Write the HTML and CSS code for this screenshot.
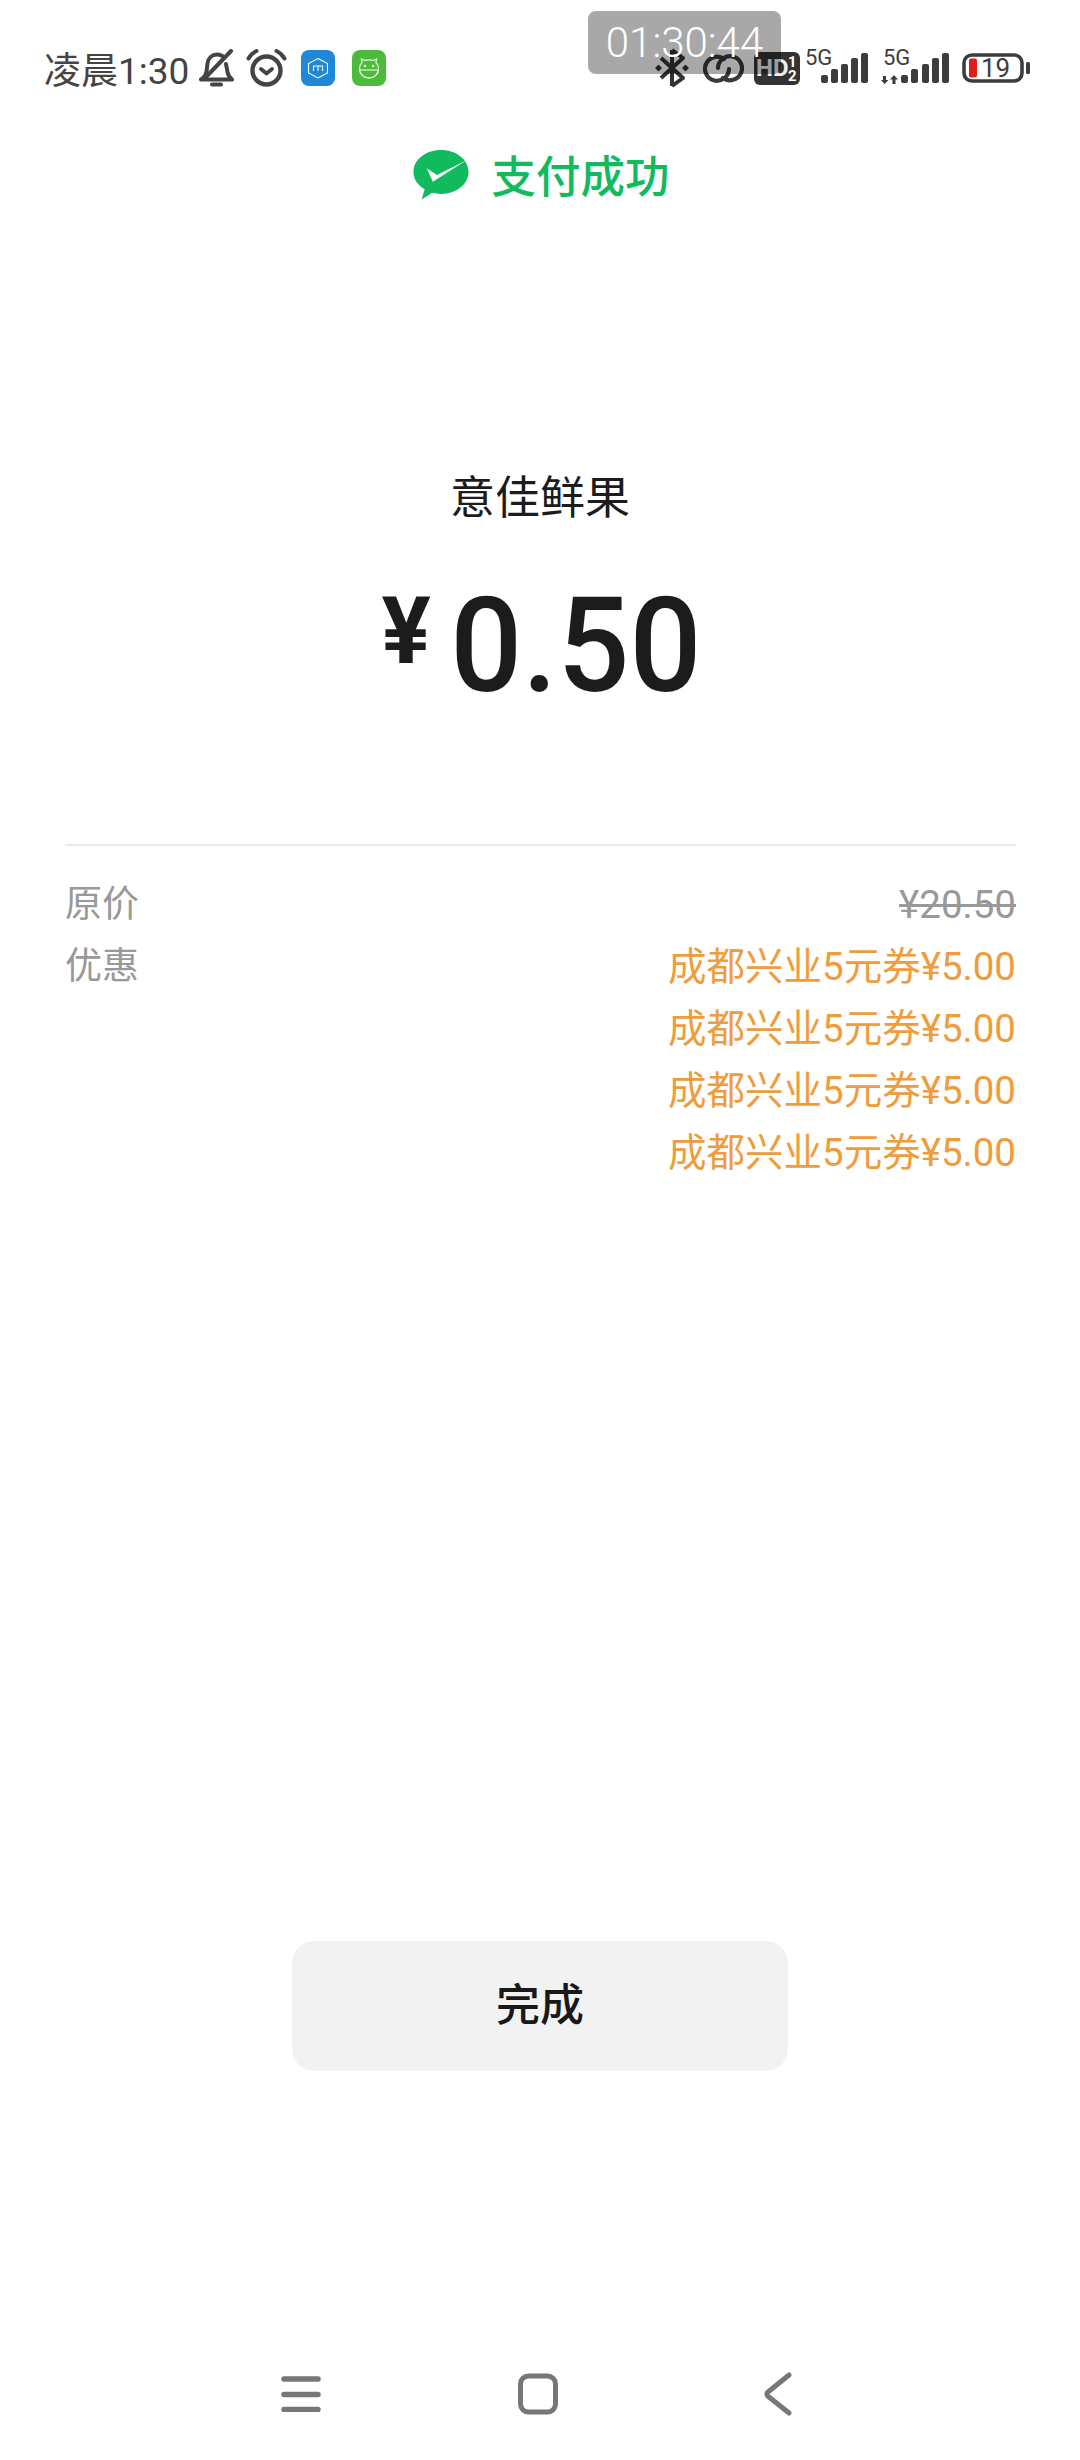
FILE: index.html

```html
<!DOCTYPE html>
<HTML lang='zh'>
   <HEAD>
      <META charset='utf-8'>
      <TITLE>支付成功</TITLE>
      <link rel="stylesheet" href="styles.css">
   </HEAD>
   <BODY>
      <DIV class='Page'>
         <!-- status bar -->
         <DIV class='StatusBar'>
            <DIV class='StatusLeft'>
               <SPAN class='Clock'>凌晨1:30</SPAN>
               <svg class='BellIcon' width='36' height='38' viewBox='0 0 36 38' fill='none' stroke='#444' stroke-width='4' stroke-linecap='round' stroke-linejoin='round'>
                  <path d='M2 30.500h31M2 30.500c3-2 5-4 5.500-8l1-8c.8-5.500 4.500-9 9.500-9 3 0 5.500 1.200 7 3M27 15l1.500 8c.6 3.500 2 5.500 4.500 7.500'/>
                  <path d='M32 2 7 28'/>
                  <path d='M13 35.500h9'/>
               </svg>
               <svg class='AlarmIcon' width='41' height='38' viewBox='0 0 41 38' fill='none' stroke='#444' stroke-linecap='round' stroke-linejoin='round'>
                  <circle cx='20.500' cy='21.500' r='14' stroke-width='4.400'/>
                  <path d='M15 20l5.500 4.500L26 20' stroke-width='3.800'/>
                  <path d='M2.500 9.500C4.500 6 7 3.500 10.500 2M38.500 9.500C36.500 6 34 3.500 30.500 2' stroke-width='4'/>
               </svg>
               <svg class='MiTile' width='34' height='36' viewBox='0 0 34 36'>
                  <rect width='34' height='36' rx='8' fill='#1f88d8'/>
                  <path d='M17 8.500l9.500 5v9.500L17 28l-9.500-5v-9.500z' fill='none' stroke='#fff' stroke-width='1.100'/>
                  <path d='M12.500 21v-5h9v5M17 16v5' fill='none' stroke='#fff' stroke-width='1.100'/>
               </svg>
               <svg class='FrogTile' width='34' height='36' viewBox='0 0 34 36'>
                  <rect width='34' height='36' rx='8' fill='#4dbb3a'/>
                  <path d='M10 12.500l-.5-3.500 3.500 1.500c2.500-.8 5.500-.8 8 0l3.500-1.500-.5 3.500c2 2 2.500 4 2.500 6.500 0 5.500-4.500 9-9.500 9s-9.500-3.500-9.500-9c0-2.500.5-4.500 2.500-6.500z' fill='none' stroke='#e8f8e0' stroke-width='1.300'/>
                  <path d='M8 20h18' stroke='#e8f8e0' stroke-width='1.100'/>
                  <circle cx='13' cy='16' r='1.300' fill='#e8f8e0'/>
                  <circle cx='21' cy='16' r='1.300' fill='#e8f8e0'/>
               </svg>
            </DIV>
            <DIV class='StatusRight'>
               <svg class='BluetoothIcon' width='36' height='40' viewBox='0 0 36 40' fill='none' stroke='#333' stroke-width='4' stroke-linejoin='round'>
                  <path d='M18 38V2M7 10l22 20-11 8M7 30l22-20-11-8'/>
                  <path d='M1 20l3.500-3.500L8 20l-3.500 3.500zM28 20l3.500-3.500L35 20l-3.500 3.500z' fill='#333' stroke='none'/>
               </svg>
               <svg class='LinkIcon' width='41' height='29' viewBox='0 0 41 29' fill='none' stroke='#3a3a3a' stroke-width='4.200' stroke-linecap='round'>
                  <path d='M21 5A12 12 0 1 0 26 15'/>
                  <path d='M20 24A12 12 0 1 0 15 14'/>
               </svg>
               <svg class='HdBadge' width='46' height='33' viewBox='0 0 46 33'>
                  <rect width='46' height='33' rx='6' fill='#333'/>
                  <text x='2' y='24' class='HdText'>HD</text>
                  <text x='34' y='14.500' class='HdNum'>1</text>
                  <text x='34' y='29' class='HdNum'>2</text>
               </svg>
               <svg class='SignalA' width='64' height='38' viewBox='0 0 64 38'>
                  <text x='0' y='19' class='NetText'>5G</text>
                  <g fill='#3c3c3c'>
                     <rect x='16' y='29' width='7' height='8' rx='2'/>
                     <rect x='26' y='23' width='7' height='14' rx='2'/>
                     <rect x='36' y='18' width='7' height='19' rx='2'/>
                     <rect x='46' y='12' width='7' height='25' rx='2'/>
                     <rect x='56' y='7' width='7' height='30' rx='2'/>
                  </g>
               </svg>
               <svg class='SignalB' width='68' height='38' viewBox='0 0 68 38'>
                  <text x='2' y='19' class='NetText'>5G</text>
                  <g fill='#3c3c3c'>
                     <path d='M2 30h3v4h2.500L3.500 38 0 34h2zM13 29l4 4.500h-2.500V38h-3v-4.500H9z'/>
                     <rect x='20' y='29' width='7' height='8' rx='2'/>
                     <rect x='30' y='23' width='7' height='14' rx='2'/>
                     <rect x='41' y='18' width='7' height='19' rx='2'/>
                     <rect x='51' y='12' width='7' height='25' rx='2'/>
                     <rect x='61' y='7' width='7' height='30' rx='2'/>
                  </g>
               </svg>
               <svg class='BatteryIcon' width='68' height='30' viewBox='0 0 68 30'>
                  <rect x='2' y='2' width='58' height='26' rx='8' fill='none' stroke='#3c3c3c' stroke-width='3.600'/>
                  <rect x='7' y='5.500' width='8' height='19' rx='2' fill='#e21b1b'/>
                  <text x='19' y='24' class='BatteryText'>19</text>
                  <rect x='64' y='9' width='4' height='12' rx='1.500' fill='#3c3c3c'/>
               </svg>
            </DIV>
            <DIV class='TimeOverlay'>01:30:44</DIV>
         </DIV>

         <!-- result header -->
         <DIV class='ResultTitle'>
            <svg class='WechatLogo' width='56' height='50' viewBox='0 0 54 49'>
               <path d='M27 0C12 0 0 9.500 0 21.500c0 7.500 4.500 13 11 17L8 48.500l10.500-6.500c2.700.7 5.500 1 8.500 1 15 0 27-9.500 27-21.500S42 0 27 0z' fill='#12ba5e'/>
               <path d='M13 18l10 6.500L52 10 19 31z' fill='#fff'/>
            </svg>
            <SPAN>支付成功</SPAN>
         </DIV>

         <!-- merchant and amount -->
         <DIV class='Merchant'>意佳鲜果</DIV>
         <DIV class='Amount'>
            <SPAN class='AmountSign'>¥</SPAN>
            <SPAN class='AmountValue'>0.50</SPAN>
         </DIV>

         <!-- price details -->
         <DIV class='Details'>
            <DIV class='DetailRow'>
               <SPAN class='DetailLabel'>原价</SPAN>
               <SPAN class='OldPrice'>¥20.50</SPAN>
            </DIV>
            <DIV class='DetailRow'>
               <SPAN class='DetailLabel'>优惠</SPAN>
               <DIV class='CouponList'>
                  <SPAN class='Coupon'>成都兴业5元券¥5.00</SPAN>
                  <SPAN class='Coupon'>成都兴业5元券¥5.00</SPAN>
                  <SPAN class='Coupon'>成都兴业5元券¥5.00</SPAN>
                  <SPAN class='Coupon'>成都兴业5元券¥5.00</SPAN>
               </DIV>
            </DIV>
         </DIV>

         <DIV class='DoneButton'>完成</DIV>

         <!-- navigation bar -->
         <DIV class='NavBar'>
            <svg width='40' height='36' viewBox='0 0 40 36' fill='none' stroke='#777' stroke-width='5.500' stroke-linecap='round'>
               <path d='M3 3h34M3 18.500h34M3 33.500h34'/>
            </svg>
            <svg class='HomeIcon' width='42' height='42' viewBox='0 0 42 42' fill='none' stroke='#777' stroke-width='5'>
               <rect x='3.500' y='3' width='35' height='36' rx='8'/>
            </svg>
            <svg width='28' height='44' viewBox='0 0 28 44' fill='none' stroke='#777' stroke-width='5' stroke-linecap='round' stroke-linejoin='round'>
               <path d='M25 3 4 20c-1.500 1.300-1.500 3 0 4.300L25 41'/>
            </svg>
         </DIV>
      </DIV>
   </BODY>
</HTML>
```

FILE: styles.css

```css
BODY
{
   margin:      0;
   background:  white;
   font-family: Roboto, 'Noto Sans CJK SC', sans-serif;
}
.Page
{
   display:        flex;
   flex-direction: column;
   height:         2460px;
   overflow:       hidden;
}
.StatusBar
{
   position:        relative;
   display:         flex;
   justify-content: space-between;
   align-items:     center;
   height:          136px;
   padding:         0 50px 0 44px;
   flex-shrink:     0;
}
.StatusLeft
{
   display:     flex;
   align-items: center;
}
.Clock
{
   font-size:    37px;
   color:        #444;
   margin-right: 10px;
}
.AlarmIcon { margin-left: 11px; }
.MiTile    { margin-left: 14px; }
.FrogTile  { margin-left: 17px; }
.StatusRight
{
   display:     flex;
   align-items: center;
}
.LinkIcon    { margin-left: 13px; }
.HdBadge     { margin-left: 10px; }
.SignalA     { margin: -6px 0 0 5px;  }
.SignalB     { margin: -6px 0 0 12px; }
.BatteryIcon { margin-left: 13px; }
.HdText
{
   font-size:   24px;
   font-weight: 700;
   fill:        #eee;
}
.HdNum
{
   font-size:   15px;
   font-weight: 700;
   fill:        white;
}
.NetText
{
   font-size: 22px;
   fill:      #3c3c3c;
}
.BatteryText
{
   font-size: 26px;
   fill:      #3c3c3c;
}
.TimeOverlay
{
   position:      absolute;
   left:          588px;
   top:           11px;
   width:         193px;
   height:        63px;
   line-height:   64px;
   border-radius: 8px;
   background:    rgba(0, 0, 0, 0.34);
   color:         white;
   font-size:     42px;
   font-weight:   300;
   text-align:    center;
}
.ResultTitle
{
   display:         flex;
   justify-content: center;
   align-items:     center;
   gap:             22px;
   height:          60px;
   margin-top:      7px;
   padding-left:    3px;
   color:           #12ba5e;
   font-size:       44.500px;
   font-weight:     500;
   flex-shrink:     0;
}
.WechatLogo { margin-top: 3px; }
.Merchant
{
   margin-top:  266px;
   height:      60px;
   line-height: 60px;
   text-align:  center;
   font-size:   45px;
   color:       #1c1c1c;
   flex-shrink: 0;
}
.Amount
{
   display:         flex;
   justify-content: center;
   align-items:     baseline;
   gap:             14px;
   height:          160px;
   line-height:     160px;
   margin-top:      37px;
   padding-left:    8px;
   color:           #1c1c1c;
   font-weight:     500;
   flex-shrink:     0;
}
.AmountSign
{
   font-size:   92px;
   font-weight: 700;
   position:    relative;
   top:         -28px;
}
.AmountValue
{
   display:   inline-block;
   font-size: 132px;
   transform: scaleX(0.96);
}
.Details
{
   margin:      118px 64px 0 65px;
   padding-top: 28px;
   border-top:  2px solid #e8e8e8;
   line-height: 62px;
   flex-shrink: 0;
}
.DetailRow
{
   display:         flex;
   justify-content: space-between;
   align-items:     flex-start;
}
.DetailLabel
{
   color:     #999;
   font-size: 37px;
}
.OldPrice
{
   color:           #999;
   font-size:       38.500px;
   text-decoration: line-through;
}
.CouponList
{
   display:        flex;
   flex-direction: column;
   align-items:    flex-end;
}
.Coupon
{
   color:     #ee9c3c;
   font-size: 38.500px;
}
.DoneButton
{
   align-self:    center;
   width:         496px;
   height:        130px;
   line-height:   130px;
   margin-top:    757px;
   border-radius: 22px;
   background:    #f2f2f2;
   color:         #191919;
   font-size:     44px;
   font-weight:   500;
   text-align:    center;
   flex-shrink:   0;
}
.NavBar
{
   display:         flex;
   justify-content: space-between;
   align-items:     center;
   margin:          301px 288px 0 281px;
   height:          44px;
   flex-shrink:     0;
}
.HomeIcon { margin-right: 10px; }
```
